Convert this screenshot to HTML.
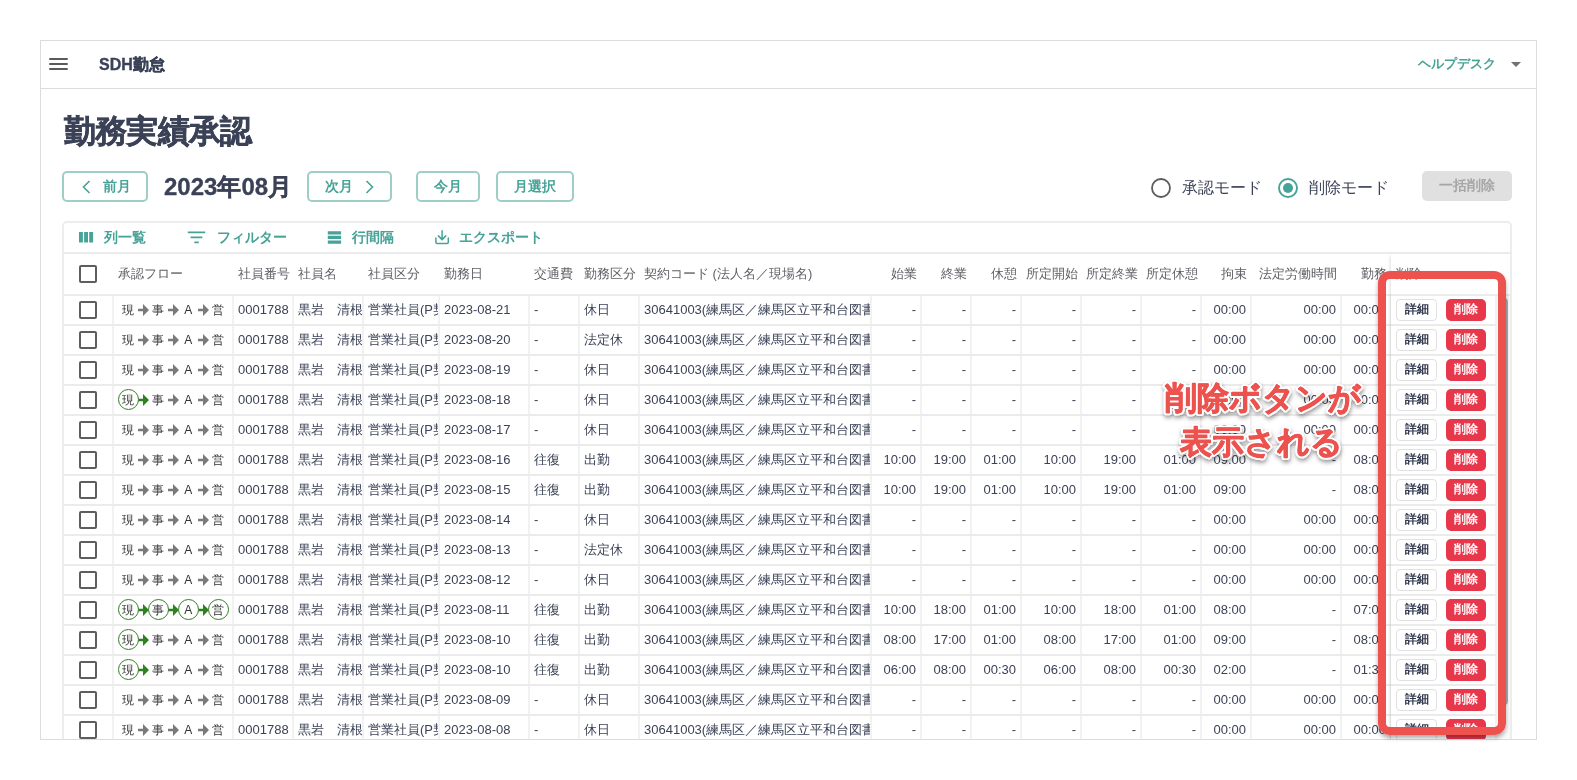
<!DOCTYPE html>
<html lang="ja"><head><meta charset="utf-8"><title>勤務実績承認</title>
<style>
*,*::before,*::after{box-sizing:border-box}
html,body{margin:0;padding:0;background:#fff}
body{width:1577px;height:780px;overflow:hidden;position:relative;font-family:"Liberation Sans",sans-serif;color:#3b4257}
.frame{position:absolute;left:40px;top:40px;width:1497px;height:700px;border:1px solid #dcdcdc;overflow:hidden;will-change:transform}
.abs{position:absolute}
.appbar{position:absolute;left:0;top:0;width:100%;height:48px;border-bottom:1px solid #dcdcdc}
.brand{position:absolute;left:58px;top:14px;font-size:16px;font-weight:bold;-webkit-text-stroke:0.35px #3b4257;line-height:20px;color:#3b4257;white-space:nowrap}
.help{position:absolute;left:1377px;top:13px;font-size:13px;font-weight:bold;line-height:20px;color:#47a297;white-space:nowrap}
h1{position:absolute;left:23px;top:70px;margin:0;font-size:32px;line-height:40px;font-weight:bold;letter-spacing:-0.8px;-webkit-text-stroke:0.5px #3b4257;color:#3b4257;white-space:nowrap}
.btn{position:absolute;top:130px;height:31px;border:2px solid #9fcec7;border-radius:5px;color:#47a297;font-size:14px;font-weight:bold;line-height:27px;white-space:nowrap;background:#fff}
.btn span{position:absolute;top:0}
.month{position:absolute;left:123px;top:128px;font-size:24px;font-weight:bold;-webkit-text-stroke:0.3px #3b4257;line-height:36px;color:#3b4257;white-space:nowrap}
.rl{position:absolute;top:136px;font-size:16px;line-height:22px;color:#3b4257;white-space:nowrap}
.bulk{position:absolute;left:1381px;top:130.3px;width:89.5px;height:30px;border-radius:5px;background:#e0e0e0;color:#a6a6a6;font-size:14px;font-weight:bold;line-height:28px;text-align:center}
.grid{position:absolute;left:21px;top:180px;width:1450px;height:600px;border:2px solid #ededed;border-radius:5px;overflow:hidden;background:#fff}
.tb{position:absolute;left:0;top:0;width:100%;height:31px;border-bottom:2px solid #ebebeb}
.tb span{position:absolute;top:0;font-size:14px;font-weight:bold;line-height:28px;color:#47a297;white-space:nowrap}
.hd{position:absolute;left:0;top:31px;width:100%;height:42px;border-bottom:2px solid #ebebeb}
.hd div{position:absolute;top:0;height:40px;line-height:40px;font-size:13px;color:#5f6066;white-space:nowrap;overflow:hidden;padding:0 4px}
.r{position:absolute;left:0;width:1433px;height:30px;border-bottom:2px solid #ebebeb}
.r>div{position:absolute;top:0;height:28px;line-height:28px;font-size:13px;color:#3b4257;white-space:nowrap;overflow:hidden;padding:0 3px 0 4px;border-right:2px solid #f2f2f2}
.r>.n{text-align:right;padding-right:4px}
.hd>.n{text-align:right;padding-right:5px}
.cb{position:absolute;left:15px;width:18px;height:18px;border:2px solid #5e5e5e;border-radius:2px;background:#fff}
.f{position:absolute;top:0;width:15px;height:28px;line-height:28px;text-align:center;font-size:12px;color:#333}
.f.c::before{content:"";position:absolute;left:-2.8px;top:3.4px;width:21px;height:21px;border:1.2px solid #2f8020;border-radius:50%;background:#fff;z-index:-1}
.f svg{position:absolute;left:2.6px;top:7.8px}
.pin{position:absolute;left:1327px;top:31px;width:106px;height:600px;background:#fff;box-shadow:-3px 0 3px -2px rgba(0,0,0,.13)}
.pin .ph{position:absolute;left:0;top:0;width:106px;height:42px;line-height:40px;font-size:13px;color:#5f6066;padding:0 5px;border-bottom:2px solid #ebebeb}
.pr{position:absolute;left:0;width:106px;height:30px;border-bottom:2px solid #ebebeb;border-right:2px solid #f2f2f2}
.b1,.b2{position:absolute;top:3px;height:22px;border-radius:4px;font-size:12px;font-weight:bold;line-height:20px;text-align:center}
.b1{left:5px;width:41px;border:1px solid #e0e0e3;background:#fff;color:#353c50;line-height:19px}
.b2{left:54.5px;width:40px;background:#e8374b;color:#fff;line-height:21px;border-radius:5px}
.track{position:absolute;left:1433px;top:73px;width:15px;height:600px;background:#fafafa}
.thumb{position:absolute;left:1436px;top:75px;width:7.6px;height:407px;border-radius:4px;background:rgba(20,40,40,.36)}
.redbox{position:absolute;left:1378.2px;top:271.1px;width:127.7px;height:463.8px;border:8px solid #ed524e;border-radius:12px;box-shadow:0 3px 4px rgba(0,0,0,.33)}
</style></head>
<body>
<div class="frame">
<div class="appbar"><svg class="abs" style="left:8px;top:16px" width="20" height="14" viewBox="0 0 20 14"><path d="M0.3 2h18.4M0.3 7h18.4M0.3 12h18.4" stroke="#5a5a5a" stroke-width="2" fill="none"/></svg><div class="brand">SDH勤怠</div><div class="help">ヘルプデスク</div><svg class="abs" style="left:1470px;top:21px" width="10" height="5" viewBox="0 0 10 5"><path d="M0 0h10L5 5z" fill="#717171"/></svg></div>
<h1>勤務実績承認</h1>
<div class="btn" style="left:21px;width:86px"><svg class="abs" style="left:18px;top:7px" width="9" height="14" viewBox="0 0 9 14"><path d="M7.5 1L1.5 7L7.5 13" stroke="#47a297" stroke-width="1.6" fill="none"/></svg><span style="left:39px">前月</span></div>
<div class="month">2023年08月</div>
<div class="btn" style="left:266px;width:85px"><span style="left:16px">次月</span><svg class="abs" style="left:56px;top:7px" width="9" height="14" viewBox="0 0 9 14"><path d="M1.5 1L7.5 7L1.5 13" stroke="#47a297" stroke-width="1.6" fill="none"/></svg></div>
<div class="btn" style="left:375px;width:64px;text-align:center">今月</div>
<div class="btn" style="left:455px;width:78px;text-align:center">月選択</div>
<svg class="abs" style="left:1109px;top:136px" width="22" height="22" viewBox="0 0 22 22"><circle cx="11" cy="11" r="9" stroke="#5c5c5c" stroke-width="1.8" fill="#fff"/></svg><div class="rl" style="left:1141px">承認モード</div><svg class="abs" style="left:1236px;top:136px" width="22" height="22" viewBox="0 0 22 22"><circle cx="11" cy="11" r="9" stroke="#47a297" stroke-width="1.9" fill="#fff"/><circle cx="11" cy="11" r="5" fill="#47a297"/></svg><div class="rl" style="left:1268px">削除モード</div><div class="bulk">一括削除</div>
<div class="grid">
<div class="tb"><svg class="abs" style="left:15px;top:9px" width="15" height="11" viewBox="0 0 15 11"><path d="M0 0h3.9v10.5H0zM5.1 0h3.9v10.5h-3.9zM10.2 0h3.9v10.5h-3.9z" fill="#47a297"/></svg><span style="left:40px">列一覧</span><svg class="abs" style="left:123px;top:8px" width="19" height="13" viewBox="0 0 19 13"><path d="M0.8 1.4h17.4M3.6 6.3h11.8M7.3 11.3h4.4" stroke="#47a297" stroke-width="1.8" fill="none"/></svg><span style="left:153px">フィルター</span><svg class="abs" style="left:262.5px;top:8px" width="15" height="13" viewBox="0 0 15 13"><path d="M0.8 0.3h13.3v3.1H0.8zM0.8 4.8h13.3v3.2H0.8zM0.8 9.6h13.3v3.1H0.8z" fill="#47a297"/></svg><span style="left:288px">行間隔</span><svg class="abs" style="left:370px;top:7px" width="16" height="15" viewBox="0 0 16 15"><path d="M8.1 0.8v8.6M4.4 5.9L8.1 9.6L11.8 5.9M1.9 8v4.2q0 1.2 1.2 1.2h10q1.2 0 1.2-1.2V8" stroke="#47a297" stroke-width="1.5" fill="none" stroke-linecap="round" stroke-linejoin="round"/></svg><span style="left:395px">エクスポート</span></div>
<div class="hd"><span class="cb" style="top:11px"></span><div style="left:50px;width:120px">承認フロー</div><div style="left:170px;width:60px">社員番号</div><div style="left:230px;width:70px">社員名</div><div style="left:300px;width:76px">社員区分</div><div style="left:376px;width:90px">勤務日</div><div style="left:466px;width:50px">交通費</div><div style="left:516px;width:60px">勤務区分</div><div style="left:576px;width:232px">契約コード (法人名／現場名)</div><div class="n" style="left:808px;width:50px">始業</div><div class="n" style="left:858px;width:50px">終業</div><div class="n" style="left:908px;width:50px">休憩</div><div class="n" style="left:958px;width:60px">所定開始</div><div class="n" style="left:1018px;width:60px">所定終業</div><div class="n" style="left:1078px;width:60px">所定休憩</div><div class="n" style="left:1138px;width:50px">拘束</div><div class="n" style="left:1188px;width:90px">法定労働時間</div><div class="n" style="left:1278px;width:50px">勤務</div></div>
<div class="r" style="top:73px"><div style="left:0;width:50px"><span class="cb" style="top:5px"></span></div><div style="left:50px;width:120px;padding:0;z-index:0"><span class="f" style="left:6.8px;z-index:2">現</span><span class="f" style="left:21.8px;z-index:1"><svg width="11" height="12" viewBox="0 0 11 12"><path d="M0 4.7H5V0L11 6L5 12V7.3H0Z" fill="#7a7a7a"/></svg></span><span class="f" style="left:36.8px;z-index:2">事</span><span class="f" style="left:51.8px;z-index:1"><svg width="11" height="12" viewBox="0 0 11 12"><path d="M0 4.7H5V0L11 6L5 12V7.3H0Z" fill="#7a7a7a"/></svg></span><span class="f" style="left:66.8px;z-index:2">A</span><span class="f" style="left:81.8px;z-index:1"><svg width="11" height="12" viewBox="0 0 11 12"><path d="M0 4.7H5V0L11 6L5 12V7.3H0Z" fill="#7a7a7a"/></svg></span><span class="f" style="left:96.8px;z-index:2">営</span></div><div style="left:170px;width:60px">0001788</div><div style="left:230px;width:70px">黒岩　清根</div><div style="left:300px;width:76px">営業社員(P契約)</div><div style="left:376px;width:90px">2023-08-21</div><div style="left:466px;width:50px">-</div><div style="left:516px;width:60px">休日</div><div style="left:576px;width:232px">30641003(練馬区／練馬区立平和台図書館)</div><div class="n" style="left:808px;width:50px">-</div><div class="n" style="left:858px;width:50px">-</div><div class="n" style="left:908px;width:50px">-</div><div class="n" style="left:958px;width:60px">-</div><div class="n" style="left:1018px;width:60px">-</div><div class="n" style="left:1078px;width:60px">-</div><div class="n" style="left:1138px;width:50px">00:00</div><div class="n" style="left:1188px;width:90px">00:00</div><div class="n" style="left:1278px;width:50px">00:00</div></div>
<div class="r" style="top:103px"><div style="left:0;width:50px"><span class="cb" style="top:5px"></span></div><div style="left:50px;width:120px;padding:0;z-index:0"><span class="f" style="left:6.8px;z-index:2">現</span><span class="f" style="left:21.8px;z-index:1"><svg width="11" height="12" viewBox="0 0 11 12"><path d="M0 4.7H5V0L11 6L5 12V7.3H0Z" fill="#7a7a7a"/></svg></span><span class="f" style="left:36.8px;z-index:2">事</span><span class="f" style="left:51.8px;z-index:1"><svg width="11" height="12" viewBox="0 0 11 12"><path d="M0 4.7H5V0L11 6L5 12V7.3H0Z" fill="#7a7a7a"/></svg></span><span class="f" style="left:66.8px;z-index:2">A</span><span class="f" style="left:81.8px;z-index:1"><svg width="11" height="12" viewBox="0 0 11 12"><path d="M0 4.7H5V0L11 6L5 12V7.3H0Z" fill="#7a7a7a"/></svg></span><span class="f" style="left:96.8px;z-index:2">営</span></div><div style="left:170px;width:60px">0001788</div><div style="left:230px;width:70px">黒岩　清根</div><div style="left:300px;width:76px">営業社員(P契約)</div><div style="left:376px;width:90px">2023-08-20</div><div style="left:466px;width:50px">-</div><div style="left:516px;width:60px">法定休</div><div style="left:576px;width:232px">30641003(練馬区／練馬区立平和台図書館)</div><div class="n" style="left:808px;width:50px">-</div><div class="n" style="left:858px;width:50px">-</div><div class="n" style="left:908px;width:50px">-</div><div class="n" style="left:958px;width:60px">-</div><div class="n" style="left:1018px;width:60px">-</div><div class="n" style="left:1078px;width:60px">-</div><div class="n" style="left:1138px;width:50px">00:00</div><div class="n" style="left:1188px;width:90px">00:00</div><div class="n" style="left:1278px;width:50px">00:00</div></div>
<div class="r" style="top:133px"><div style="left:0;width:50px"><span class="cb" style="top:5px"></span></div><div style="left:50px;width:120px;padding:0;z-index:0"><span class="f" style="left:6.8px;z-index:2">現</span><span class="f" style="left:21.8px;z-index:1"><svg width="11" height="12" viewBox="0 0 11 12"><path d="M0 4.7H5V0L11 6L5 12V7.3H0Z" fill="#7a7a7a"/></svg></span><span class="f" style="left:36.8px;z-index:2">事</span><span class="f" style="left:51.8px;z-index:1"><svg width="11" height="12" viewBox="0 0 11 12"><path d="M0 4.7H5V0L11 6L5 12V7.3H0Z" fill="#7a7a7a"/></svg></span><span class="f" style="left:66.8px;z-index:2">A</span><span class="f" style="left:81.8px;z-index:1"><svg width="11" height="12" viewBox="0 0 11 12"><path d="M0 4.7H5V0L11 6L5 12V7.3H0Z" fill="#7a7a7a"/></svg></span><span class="f" style="left:96.8px;z-index:2">営</span></div><div style="left:170px;width:60px">0001788</div><div style="left:230px;width:70px">黒岩　清根</div><div style="left:300px;width:76px">営業社員(P契約)</div><div style="left:376px;width:90px">2023-08-19</div><div style="left:466px;width:50px">-</div><div style="left:516px;width:60px">休日</div><div style="left:576px;width:232px">30641003(練馬区／練馬区立平和台図書館)</div><div class="n" style="left:808px;width:50px">-</div><div class="n" style="left:858px;width:50px">-</div><div class="n" style="left:908px;width:50px">-</div><div class="n" style="left:958px;width:60px">-</div><div class="n" style="left:1018px;width:60px">-</div><div class="n" style="left:1078px;width:60px">-</div><div class="n" style="left:1138px;width:50px">00:00</div><div class="n" style="left:1188px;width:90px">00:00</div><div class="n" style="left:1278px;width:50px">00:00</div></div>
<div class="r" style="top:163px"><div style="left:0;width:50px"><span class="cb" style="top:5px"></span></div><div style="left:50px;width:120px;padding:0;z-index:0"><span class="f c" style="left:6.8px;z-index:2">現</span><span class="f" style="left:21.8px;z-index:1"><svg width="11" height="12" viewBox="0 0 11 12"><path d="M0 4.7H5V0L11 6L5 12V7.3H0Z" fill="#2f8020"/></svg></span><span class="f" style="left:36.8px;z-index:2">事</span><span class="f" style="left:51.8px;z-index:1"><svg width="11" height="12" viewBox="0 0 11 12"><path d="M0 4.7H5V0L11 6L5 12V7.3H0Z" fill="#7a7a7a"/></svg></span><span class="f" style="left:66.8px;z-index:2">A</span><span class="f" style="left:81.8px;z-index:1"><svg width="11" height="12" viewBox="0 0 11 12"><path d="M0 4.7H5V0L11 6L5 12V7.3H0Z" fill="#7a7a7a"/></svg></span><span class="f" style="left:96.8px;z-index:2">営</span></div><div style="left:170px;width:60px">0001788</div><div style="left:230px;width:70px">黒岩　清根</div><div style="left:300px;width:76px">営業社員(P契約)</div><div style="left:376px;width:90px">2023-08-18</div><div style="left:466px;width:50px">-</div><div style="left:516px;width:60px">休日</div><div style="left:576px;width:232px">30641003(練馬区／練馬区立平和台図書館)</div><div class="n" style="left:808px;width:50px">-</div><div class="n" style="left:858px;width:50px">-</div><div class="n" style="left:908px;width:50px">-</div><div class="n" style="left:958px;width:60px">-</div><div class="n" style="left:1018px;width:60px">-</div><div class="n" style="left:1078px;width:60px">-</div><div class="n" style="left:1138px;width:50px">00:00</div><div class="n" style="left:1188px;width:90px">00:00</div><div class="n" style="left:1278px;width:50px">00:00</div></div>
<div class="r" style="top:193px"><div style="left:0;width:50px"><span class="cb" style="top:5px"></span></div><div style="left:50px;width:120px;padding:0;z-index:0"><span class="f" style="left:6.8px;z-index:2">現</span><span class="f" style="left:21.8px;z-index:1"><svg width="11" height="12" viewBox="0 0 11 12"><path d="M0 4.7H5V0L11 6L5 12V7.3H0Z" fill="#7a7a7a"/></svg></span><span class="f" style="left:36.8px;z-index:2">事</span><span class="f" style="left:51.8px;z-index:1"><svg width="11" height="12" viewBox="0 0 11 12"><path d="M0 4.7H5V0L11 6L5 12V7.3H0Z" fill="#7a7a7a"/></svg></span><span class="f" style="left:66.8px;z-index:2">A</span><span class="f" style="left:81.8px;z-index:1"><svg width="11" height="12" viewBox="0 0 11 12"><path d="M0 4.7H5V0L11 6L5 12V7.3H0Z" fill="#7a7a7a"/></svg></span><span class="f" style="left:96.8px;z-index:2">営</span></div><div style="left:170px;width:60px">0001788</div><div style="left:230px;width:70px">黒岩　清根</div><div style="left:300px;width:76px">営業社員(P契約)</div><div style="left:376px;width:90px">2023-08-17</div><div style="left:466px;width:50px">-</div><div style="left:516px;width:60px">休日</div><div style="left:576px;width:232px">30641003(練馬区／練馬区立平和台図書館)</div><div class="n" style="left:808px;width:50px">-</div><div class="n" style="left:858px;width:50px">-</div><div class="n" style="left:908px;width:50px">-</div><div class="n" style="left:958px;width:60px">-</div><div class="n" style="left:1018px;width:60px">-</div><div class="n" style="left:1078px;width:60px">-</div><div class="n" style="left:1138px;width:50px">00:00</div><div class="n" style="left:1188px;width:90px">00:00</div><div class="n" style="left:1278px;width:50px">00:00</div></div>
<div class="r" style="top:223px"><div style="left:0;width:50px"><span class="cb" style="top:5px"></span></div><div style="left:50px;width:120px;padding:0;z-index:0"><span class="f" style="left:6.8px;z-index:2">現</span><span class="f" style="left:21.8px;z-index:1"><svg width="11" height="12" viewBox="0 0 11 12"><path d="M0 4.7H5V0L11 6L5 12V7.3H0Z" fill="#7a7a7a"/></svg></span><span class="f" style="left:36.8px;z-index:2">事</span><span class="f" style="left:51.8px;z-index:1"><svg width="11" height="12" viewBox="0 0 11 12"><path d="M0 4.7H5V0L11 6L5 12V7.3H0Z" fill="#7a7a7a"/></svg></span><span class="f" style="left:66.8px;z-index:2">A</span><span class="f" style="left:81.8px;z-index:1"><svg width="11" height="12" viewBox="0 0 11 12"><path d="M0 4.7H5V0L11 6L5 12V7.3H0Z" fill="#7a7a7a"/></svg></span><span class="f" style="left:96.8px;z-index:2">営</span></div><div style="left:170px;width:60px">0001788</div><div style="left:230px;width:70px">黒岩　清根</div><div style="left:300px;width:76px">営業社員(P契約)</div><div style="left:376px;width:90px">2023-08-16</div><div style="left:466px;width:50px">往復</div><div style="left:516px;width:60px">出勤</div><div style="left:576px;width:232px">30641003(練馬区／練馬区立平和台図書館)</div><div class="n" style="left:808px;width:50px">10:00</div><div class="n" style="left:858px;width:50px">19:00</div><div class="n" style="left:908px;width:50px">01:00</div><div class="n" style="left:958px;width:60px">10:00</div><div class="n" style="left:1018px;width:60px">19:00</div><div class="n" style="left:1078px;width:60px">01:00</div><div class="n" style="left:1138px;width:50px">09:00</div><div class="n" style="left:1188px;width:90px">-</div><div class="n" style="left:1278px;width:50px">08:00</div></div>
<div class="r" style="top:253px"><div style="left:0;width:50px"><span class="cb" style="top:5px"></span></div><div style="left:50px;width:120px;padding:0;z-index:0"><span class="f" style="left:6.8px;z-index:2">現</span><span class="f" style="left:21.8px;z-index:1"><svg width="11" height="12" viewBox="0 0 11 12"><path d="M0 4.7H5V0L11 6L5 12V7.3H0Z" fill="#7a7a7a"/></svg></span><span class="f" style="left:36.8px;z-index:2">事</span><span class="f" style="left:51.8px;z-index:1"><svg width="11" height="12" viewBox="0 0 11 12"><path d="M0 4.7H5V0L11 6L5 12V7.3H0Z" fill="#7a7a7a"/></svg></span><span class="f" style="left:66.8px;z-index:2">A</span><span class="f" style="left:81.8px;z-index:1"><svg width="11" height="12" viewBox="0 0 11 12"><path d="M0 4.7H5V0L11 6L5 12V7.3H0Z" fill="#7a7a7a"/></svg></span><span class="f" style="left:96.8px;z-index:2">営</span></div><div style="left:170px;width:60px">0001788</div><div style="left:230px;width:70px">黒岩　清根</div><div style="left:300px;width:76px">営業社員(P契約)</div><div style="left:376px;width:90px">2023-08-15</div><div style="left:466px;width:50px">往復</div><div style="left:516px;width:60px">出勤</div><div style="left:576px;width:232px">30641003(練馬区／練馬区立平和台図書館)</div><div class="n" style="left:808px;width:50px">10:00</div><div class="n" style="left:858px;width:50px">19:00</div><div class="n" style="left:908px;width:50px">01:00</div><div class="n" style="left:958px;width:60px">10:00</div><div class="n" style="left:1018px;width:60px">19:00</div><div class="n" style="left:1078px;width:60px">01:00</div><div class="n" style="left:1138px;width:50px">09:00</div><div class="n" style="left:1188px;width:90px">-</div><div class="n" style="left:1278px;width:50px">08:00</div></div>
<div class="r" style="top:283px"><div style="left:0;width:50px"><span class="cb" style="top:5px"></span></div><div style="left:50px;width:120px;padding:0;z-index:0"><span class="f" style="left:6.8px;z-index:2">現</span><span class="f" style="left:21.8px;z-index:1"><svg width="11" height="12" viewBox="0 0 11 12"><path d="M0 4.7H5V0L11 6L5 12V7.3H0Z" fill="#7a7a7a"/></svg></span><span class="f" style="left:36.8px;z-index:2">事</span><span class="f" style="left:51.8px;z-index:1"><svg width="11" height="12" viewBox="0 0 11 12"><path d="M0 4.7H5V0L11 6L5 12V7.3H0Z" fill="#7a7a7a"/></svg></span><span class="f" style="left:66.8px;z-index:2">A</span><span class="f" style="left:81.8px;z-index:1"><svg width="11" height="12" viewBox="0 0 11 12"><path d="M0 4.7H5V0L11 6L5 12V7.3H0Z" fill="#7a7a7a"/></svg></span><span class="f" style="left:96.8px;z-index:2">営</span></div><div style="left:170px;width:60px">0001788</div><div style="left:230px;width:70px">黒岩　清根</div><div style="left:300px;width:76px">営業社員(P契約)</div><div style="left:376px;width:90px">2023-08-14</div><div style="left:466px;width:50px">-</div><div style="left:516px;width:60px">休日</div><div style="left:576px;width:232px">30641003(練馬区／練馬区立平和台図書館)</div><div class="n" style="left:808px;width:50px">-</div><div class="n" style="left:858px;width:50px">-</div><div class="n" style="left:908px;width:50px">-</div><div class="n" style="left:958px;width:60px">-</div><div class="n" style="left:1018px;width:60px">-</div><div class="n" style="left:1078px;width:60px">-</div><div class="n" style="left:1138px;width:50px">00:00</div><div class="n" style="left:1188px;width:90px">00:00</div><div class="n" style="left:1278px;width:50px">00:00</div></div>
<div class="r" style="top:313px"><div style="left:0;width:50px"><span class="cb" style="top:5px"></span></div><div style="left:50px;width:120px;padding:0;z-index:0"><span class="f" style="left:6.8px;z-index:2">現</span><span class="f" style="left:21.8px;z-index:1"><svg width="11" height="12" viewBox="0 0 11 12"><path d="M0 4.7H5V0L11 6L5 12V7.3H0Z" fill="#7a7a7a"/></svg></span><span class="f" style="left:36.8px;z-index:2">事</span><span class="f" style="left:51.8px;z-index:1"><svg width="11" height="12" viewBox="0 0 11 12"><path d="M0 4.7H5V0L11 6L5 12V7.3H0Z" fill="#7a7a7a"/></svg></span><span class="f" style="left:66.8px;z-index:2">A</span><span class="f" style="left:81.8px;z-index:1"><svg width="11" height="12" viewBox="0 0 11 12"><path d="M0 4.7H5V0L11 6L5 12V7.3H0Z" fill="#7a7a7a"/></svg></span><span class="f" style="left:96.8px;z-index:2">営</span></div><div style="left:170px;width:60px">0001788</div><div style="left:230px;width:70px">黒岩　清根</div><div style="left:300px;width:76px">営業社員(P契約)</div><div style="left:376px;width:90px">2023-08-13</div><div style="left:466px;width:50px">-</div><div style="left:516px;width:60px">法定休</div><div style="left:576px;width:232px">30641003(練馬区／練馬区立平和台図書館)</div><div class="n" style="left:808px;width:50px">-</div><div class="n" style="left:858px;width:50px">-</div><div class="n" style="left:908px;width:50px">-</div><div class="n" style="left:958px;width:60px">-</div><div class="n" style="left:1018px;width:60px">-</div><div class="n" style="left:1078px;width:60px">-</div><div class="n" style="left:1138px;width:50px">00:00</div><div class="n" style="left:1188px;width:90px">00:00</div><div class="n" style="left:1278px;width:50px">00:00</div></div>
<div class="r" style="top:343px"><div style="left:0;width:50px"><span class="cb" style="top:5px"></span></div><div style="left:50px;width:120px;padding:0;z-index:0"><span class="f" style="left:6.8px;z-index:2">現</span><span class="f" style="left:21.8px;z-index:1"><svg width="11" height="12" viewBox="0 0 11 12"><path d="M0 4.7H5V0L11 6L5 12V7.3H0Z" fill="#7a7a7a"/></svg></span><span class="f" style="left:36.8px;z-index:2">事</span><span class="f" style="left:51.8px;z-index:1"><svg width="11" height="12" viewBox="0 0 11 12"><path d="M0 4.7H5V0L11 6L5 12V7.3H0Z" fill="#7a7a7a"/></svg></span><span class="f" style="left:66.8px;z-index:2">A</span><span class="f" style="left:81.8px;z-index:1"><svg width="11" height="12" viewBox="0 0 11 12"><path d="M0 4.7H5V0L11 6L5 12V7.3H0Z" fill="#7a7a7a"/></svg></span><span class="f" style="left:96.8px;z-index:2">営</span></div><div style="left:170px;width:60px">0001788</div><div style="left:230px;width:70px">黒岩　清根</div><div style="left:300px;width:76px">営業社員(P契約)</div><div style="left:376px;width:90px">2023-08-12</div><div style="left:466px;width:50px">-</div><div style="left:516px;width:60px">休日</div><div style="left:576px;width:232px">30641003(練馬区／練馬区立平和台図書館)</div><div class="n" style="left:808px;width:50px">-</div><div class="n" style="left:858px;width:50px">-</div><div class="n" style="left:908px;width:50px">-</div><div class="n" style="left:958px;width:60px">-</div><div class="n" style="left:1018px;width:60px">-</div><div class="n" style="left:1078px;width:60px">-</div><div class="n" style="left:1138px;width:50px">00:00</div><div class="n" style="left:1188px;width:90px">00:00</div><div class="n" style="left:1278px;width:50px">00:00</div></div>
<div class="r" style="top:373px"><div style="left:0;width:50px"><span class="cb" style="top:5px"></span></div><div style="left:50px;width:120px;padding:0;z-index:0"><span class="f c" style="left:6.8px;z-index:2">現</span><span class="f" style="left:21.8px;z-index:1"><svg width="11" height="12" viewBox="0 0 11 12"><path d="M0 4.7H5V0L11 6L5 12V7.3H0Z" fill="#2f8020"/></svg></span><span class="f c" style="left:36.8px;z-index:2">事</span><span class="f" style="left:51.8px;z-index:1"><svg width="11" height="12" viewBox="0 0 11 12"><path d="M0 4.7H5V0L11 6L5 12V7.3H0Z" fill="#2f8020"/></svg></span><span class="f c" style="left:66.8px;z-index:2">A</span><span class="f" style="left:81.8px;z-index:1"><svg width="11" height="12" viewBox="0 0 11 12"><path d="M0 4.7H5V0L11 6L5 12V7.3H0Z" fill="#2f8020"/></svg></span><span class="f c" style="left:96.8px;z-index:2">営</span></div><div style="left:170px;width:60px">0001788</div><div style="left:230px;width:70px">黒岩　清根</div><div style="left:300px;width:76px">営業社員(P契約)</div><div style="left:376px;width:90px">2023-08-11</div><div style="left:466px;width:50px">往復</div><div style="left:516px;width:60px">出勤</div><div style="left:576px;width:232px">30641003(練馬区／練馬区立平和台図書館)</div><div class="n" style="left:808px;width:50px">10:00</div><div class="n" style="left:858px;width:50px">18:00</div><div class="n" style="left:908px;width:50px">01:00</div><div class="n" style="left:958px;width:60px">10:00</div><div class="n" style="left:1018px;width:60px">18:00</div><div class="n" style="left:1078px;width:60px">01:00</div><div class="n" style="left:1138px;width:50px">08:00</div><div class="n" style="left:1188px;width:90px">-</div><div class="n" style="left:1278px;width:50px">07:00</div></div>
<div class="r" style="top:403px"><div style="left:0;width:50px"><span class="cb" style="top:5px"></span></div><div style="left:50px;width:120px;padding:0;z-index:0"><span class="f c" style="left:6.8px;z-index:2">現</span><span class="f" style="left:21.8px;z-index:1"><svg width="11" height="12" viewBox="0 0 11 12"><path d="M0 4.7H5V0L11 6L5 12V7.3H0Z" fill="#2f8020"/></svg></span><span class="f" style="left:36.8px;z-index:2">事</span><span class="f" style="left:51.8px;z-index:1"><svg width="11" height="12" viewBox="0 0 11 12"><path d="M0 4.7H5V0L11 6L5 12V7.3H0Z" fill="#7a7a7a"/></svg></span><span class="f" style="left:66.8px;z-index:2">A</span><span class="f" style="left:81.8px;z-index:1"><svg width="11" height="12" viewBox="0 0 11 12"><path d="M0 4.7H5V0L11 6L5 12V7.3H0Z" fill="#7a7a7a"/></svg></span><span class="f" style="left:96.8px;z-index:2">営</span></div><div style="left:170px;width:60px">0001788</div><div style="left:230px;width:70px">黒岩　清根</div><div style="left:300px;width:76px">営業社員(P契約)</div><div style="left:376px;width:90px">2023-08-10</div><div style="left:466px;width:50px">往復</div><div style="left:516px;width:60px">出勤</div><div style="left:576px;width:232px">30641003(練馬区／練馬区立平和台図書館)</div><div class="n" style="left:808px;width:50px">08:00</div><div class="n" style="left:858px;width:50px">17:00</div><div class="n" style="left:908px;width:50px">01:00</div><div class="n" style="left:958px;width:60px">08:00</div><div class="n" style="left:1018px;width:60px">17:00</div><div class="n" style="left:1078px;width:60px">01:00</div><div class="n" style="left:1138px;width:50px">09:00</div><div class="n" style="left:1188px;width:90px">-</div><div class="n" style="left:1278px;width:50px">08:00</div></div>
<div class="r" style="top:433px"><div style="left:0;width:50px"><span class="cb" style="top:5px"></span></div><div style="left:50px;width:120px;padding:0;z-index:0"><span class="f c" style="left:6.8px;z-index:2">現</span><span class="f" style="left:21.8px;z-index:1"><svg width="11" height="12" viewBox="0 0 11 12"><path d="M0 4.7H5V0L11 6L5 12V7.3H0Z" fill="#2f8020"/></svg></span><span class="f" style="left:36.8px;z-index:2">事</span><span class="f" style="left:51.8px;z-index:1"><svg width="11" height="12" viewBox="0 0 11 12"><path d="M0 4.7H5V0L11 6L5 12V7.3H0Z" fill="#7a7a7a"/></svg></span><span class="f" style="left:66.8px;z-index:2">A</span><span class="f" style="left:81.8px;z-index:1"><svg width="11" height="12" viewBox="0 0 11 12"><path d="M0 4.7H5V0L11 6L5 12V7.3H0Z" fill="#7a7a7a"/></svg></span><span class="f" style="left:96.8px;z-index:2">営</span></div><div style="left:170px;width:60px">0001788</div><div style="left:230px;width:70px">黒岩　清根</div><div style="left:300px;width:76px">営業社員(P契約)</div><div style="left:376px;width:90px">2023-08-10</div><div style="left:466px;width:50px">往復</div><div style="left:516px;width:60px">出勤</div><div style="left:576px;width:232px">30641003(練馬区／練馬区立平和台図書館)</div><div class="n" style="left:808px;width:50px">06:00</div><div class="n" style="left:858px;width:50px">08:00</div><div class="n" style="left:908px;width:50px">00:30</div><div class="n" style="left:958px;width:60px">06:00</div><div class="n" style="left:1018px;width:60px">08:00</div><div class="n" style="left:1078px;width:60px">00:30</div><div class="n" style="left:1138px;width:50px">02:00</div><div class="n" style="left:1188px;width:90px">-</div><div class="n" style="left:1278px;width:50px">01:30</div></div>
<div class="r" style="top:463px"><div style="left:0;width:50px"><span class="cb" style="top:5px"></span></div><div style="left:50px;width:120px;padding:0;z-index:0"><span class="f" style="left:6.8px;z-index:2">現</span><span class="f" style="left:21.8px;z-index:1"><svg width="11" height="12" viewBox="0 0 11 12"><path d="M0 4.7H5V0L11 6L5 12V7.3H0Z" fill="#7a7a7a"/></svg></span><span class="f" style="left:36.8px;z-index:2">事</span><span class="f" style="left:51.8px;z-index:1"><svg width="11" height="12" viewBox="0 0 11 12"><path d="M0 4.7H5V0L11 6L5 12V7.3H0Z" fill="#7a7a7a"/></svg></span><span class="f" style="left:66.8px;z-index:2">A</span><span class="f" style="left:81.8px;z-index:1"><svg width="11" height="12" viewBox="0 0 11 12"><path d="M0 4.7H5V0L11 6L5 12V7.3H0Z" fill="#7a7a7a"/></svg></span><span class="f" style="left:96.8px;z-index:2">営</span></div><div style="left:170px;width:60px">0001788</div><div style="left:230px;width:70px">黒岩　清根</div><div style="left:300px;width:76px">営業社員(P契約)</div><div style="left:376px;width:90px">2023-08-09</div><div style="left:466px;width:50px">-</div><div style="left:516px;width:60px">休日</div><div style="left:576px;width:232px">30641003(練馬区／練馬区立平和台図書館)</div><div class="n" style="left:808px;width:50px">-</div><div class="n" style="left:858px;width:50px">-</div><div class="n" style="left:908px;width:50px">-</div><div class="n" style="left:958px;width:60px">-</div><div class="n" style="left:1018px;width:60px">-</div><div class="n" style="left:1078px;width:60px">-</div><div class="n" style="left:1138px;width:50px">00:00</div><div class="n" style="left:1188px;width:90px">00:00</div><div class="n" style="left:1278px;width:50px">00:00</div></div>
<div class="r" style="top:493px"><div style="left:0;width:50px"><span class="cb" style="top:5px"></span></div><div style="left:50px;width:120px;padding:0;z-index:0"><span class="f" style="left:6.8px;z-index:2">現</span><span class="f" style="left:21.8px;z-index:1"><svg width="11" height="12" viewBox="0 0 11 12"><path d="M0 4.7H5V0L11 6L5 12V7.3H0Z" fill="#7a7a7a"/></svg></span><span class="f" style="left:36.8px;z-index:2">事</span><span class="f" style="left:51.8px;z-index:1"><svg width="11" height="12" viewBox="0 0 11 12"><path d="M0 4.7H5V0L11 6L5 12V7.3H0Z" fill="#7a7a7a"/></svg></span><span class="f" style="left:66.8px;z-index:2">A</span><span class="f" style="left:81.8px;z-index:1"><svg width="11" height="12" viewBox="0 0 11 12"><path d="M0 4.7H5V0L11 6L5 12V7.3H0Z" fill="#7a7a7a"/></svg></span><span class="f" style="left:96.8px;z-index:2">営</span></div><div style="left:170px;width:60px">0001788</div><div style="left:230px;width:70px">黒岩　清根</div><div style="left:300px;width:76px">営業社員(P契約)</div><div style="left:376px;width:90px">2023-08-08</div><div style="left:466px;width:50px">-</div><div style="left:516px;width:60px">休日</div><div style="left:576px;width:232px">30641003(練馬区／練馬区立平和台図書館)</div><div class="n" style="left:808px;width:50px">-</div><div class="n" style="left:858px;width:50px">-</div><div class="n" style="left:908px;width:50px">-</div><div class="n" style="left:958px;width:60px">-</div><div class="n" style="left:1018px;width:60px">-</div><div class="n" style="left:1078px;width:60px">-</div><div class="n" style="left:1138px;width:50px">00:00</div><div class="n" style="left:1188px;width:90px">00:00</div><div class="n" style="left:1278px;width:50px">00:00</div></div>
<div class="pin"><div class="ph">削除</div><div class="pr" style="top:42px"><span class="b1">詳細</span><span class="b2">削除</span></div><div class="pr" style="top:72px"><span class="b1">詳細</span><span class="b2">削除</span></div><div class="pr" style="top:102px"><span class="b1">詳細</span><span class="b2">削除</span></div><div class="pr" style="top:132px"><span class="b1">詳細</span><span class="b2">削除</span></div><div class="pr" style="top:162px"><span class="b1">詳細</span><span class="b2">削除</span></div><div class="pr" style="top:192px"><span class="b1">詳細</span><span class="b2">削除</span></div><div class="pr" style="top:222px"><span class="b1">詳細</span><span class="b2">削除</span></div><div class="pr" style="top:252px"><span class="b1">詳細</span><span class="b2">削除</span></div><div class="pr" style="top:282px"><span class="b1">詳細</span><span class="b2">削除</span></div><div class="pr" style="top:312px"><span class="b1">詳細</span><span class="b2">削除</span></div><div class="pr" style="top:342px"><span class="b1">詳細</span><span class="b2">削除</span></div><div class="pr" style="top:372px"><span class="b1">詳細</span><span class="b2">削除</span></div><div class="pr" style="top:402px"><span class="b1">詳細</span><span class="b2">削除</span></div><div class="pr" style="top:432px"><span class="b1">詳細</span><span class="b2">削除</span></div><div class="pr" style="top:462px"><span class="b1">詳細</span><span class="b2">削除</span></div></div>
<div class="track"></div><div class="thumb"></div></div>
</div>
<div class="redbox"></div>
<svg class="abs" style="left:1140px;top:365px;overflow:visible" width="250" height="110" viewBox="0 0 250 110"><defs><filter id="ds" x="-10%" y="-10%" width="120%" height="130%"><feDropShadow dx="0.5" dy="2.5" stdDeviation="2" flood-color="#000" flood-opacity=".42"/></filter></defs><g font-family="Liberation Sans, sans-serif" font-weight="bold" font-size="31.5" text-anchor="middle" filter="url(#ds)" fill="#ec524e" stroke="#fff" stroke-width="4.6" stroke-linejoin="round" paint-order="stroke"><text x="122.5" y="43.5">削除ボタンが</text><text x="121" y="87.5">表示される</text></g><g font-family="Liberation Sans, sans-serif" font-weight="bold" font-size="31.5" text-anchor="middle" fill="#ec524e" stroke="#ec524e" stroke-width="0.9" stroke-linejoin="round"><text x="122.5" y="43.5">削除ボタンが</text><text x="121" y="87.5">表示される</text></g></svg>
</body></html>
